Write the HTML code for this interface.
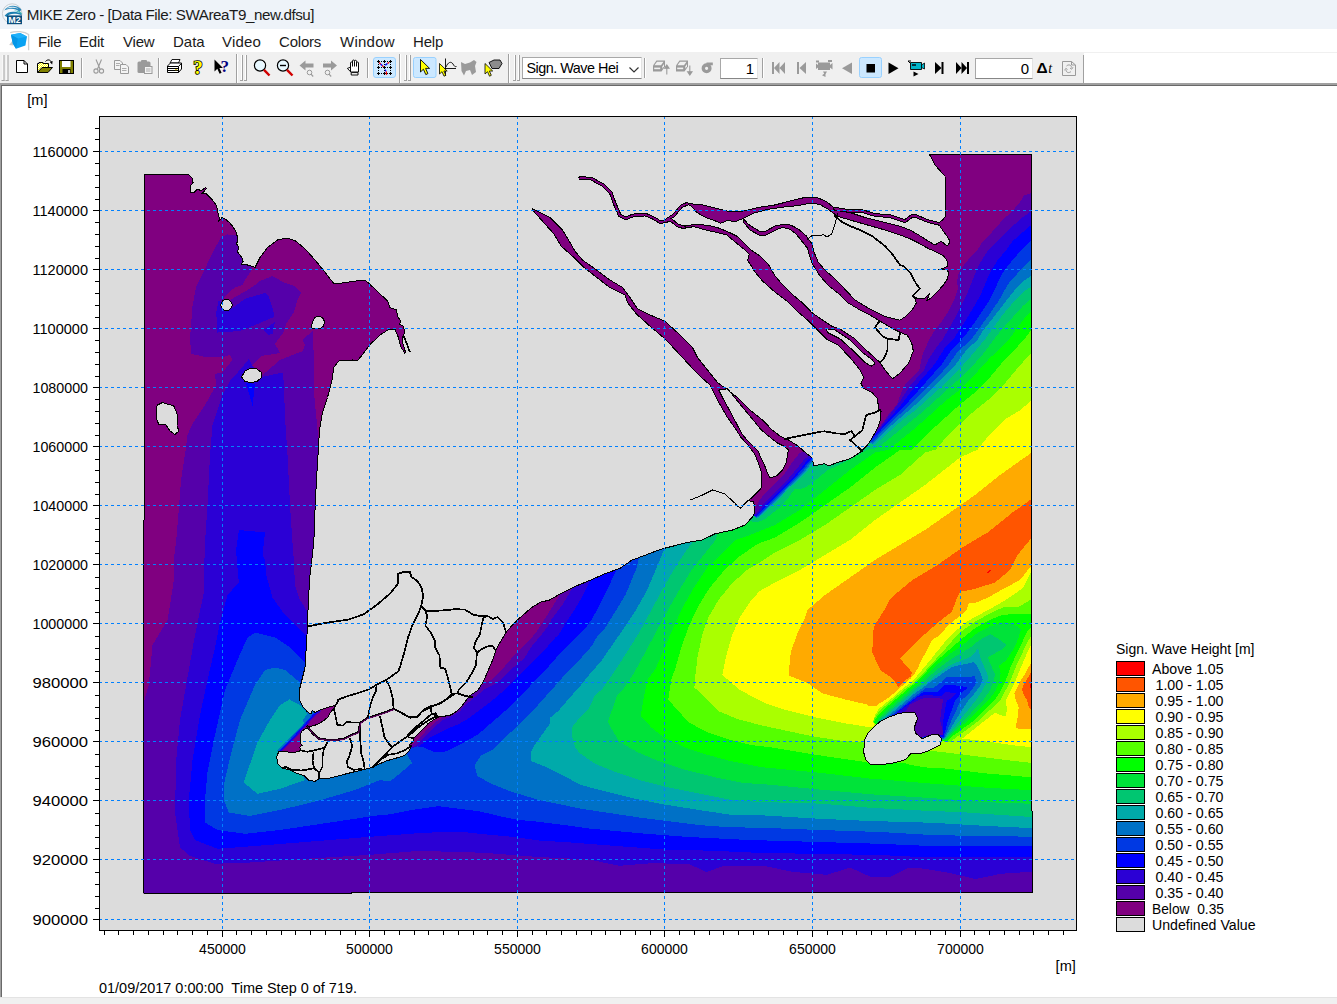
<!DOCTYPE html>
<html><head><meta charset="utf-8"><title>MIKE Zero - [Data File: SWAreaT9_new.dfsu]</title>
<style>
html,body{margin:0;padding:0;}
body{width:1337px;height:1004px;position:relative;overflow:hidden;background:#fff;
 font-family:"Liberation Sans",Arial,sans-serif;}
.abs{position:absolute;}
#title{left:0;top:0;width:1337px;height:29px;background:#EEF3F9;}
#title span{position:absolute;left:26.8px;top:5.5px;font-size:15.2px;color:#1b1b1b;white-space:nowrap;letter-spacing:-0.44px;}
#menu{left:0;top:29px;width:1337px;height:23px;background:#fff;}
#menu span{position:absolute;top:4px;font-size:15px;color:#1b1b1b;white-space:nowrap;letter-spacing:-0.2px;}
#tb{left:0;top:52px;width:1084px;height:31px;background:#F0F0F0;}
#tbline1{left:0;top:83px;width:1337px;height:2px;background:#A0A0A0;}
#tbline2{left:1px;top:85px;width:1336px;height:1px;background:#696969;}
#leftb1{left:0;top:85px;width:1px;height:912px;background:#A0A0A0;}
#leftb2{left:1px;top:85px;width:1px;height:912px;background:#696969;}
#status{left:0;top:997px;width:1337px;height:7px;background:#F0F0F0;border-top:1px solid #E3E3E3;box-sizing:border-box;}
.tbx{position:absolute;background:#fff;border:1px solid;border-color:#A8A8A8 #E3E3E3 #868686 #A8A8A8;box-sizing:border-box;
 font-size:15px;color:#000;white-space:nowrap;}
.hl{position:absolute;background:#CCE8FF;border:1px solid #99D1FF;box-sizing:border-box;border-radius:2px;}
</style></head><body>
<svg width="1337" height="1004" viewBox="0 0 1337 1004" style="position:absolute;left:0;top:0">
<defs><clipPath id="w"><polygon points="144.5,174.5 188.8,174.5 192.5,178.8 193.1,182.5 190.6,185.6 190,193.1 195,191.9 196.9,189.4 199.4,190 201.9,190 205.6,187.5 206.2,188.8 201.9,193.8 205.6,193.1 208.8,196.2 212.5,200 215.6,204.4 217.5,208.8 218.1,213.8 219.4,218.8 218.5,221.9 221.9,217.8 225,218.8 229.4,222.5 233.1,226.9 235.6,231.2 236.9,235 238.1,241.2 236.2,243.1 238.8,247.5 237.5,251.9 240,255 242.5,258.8 243.1,261.2 241.5,264.4 245,264.4 250,265.6 255,267.5 260,257.5 267.5,247.5 277.5,240 286,238 295,240.5 305,248.8 315,260 324,271 334,283.8 342.5,283 357.5,280.8 366,280.8 376,290 387.5,301 390,307.5 396.5,310 397.5,315.9 400.7,321.5 399.6,324.3 402.8,325.7 404.5,330.5 403.8,336.1 402,337 403,343.8 405.5,352.1 404.8,353.2 400.7,346.6 397.9,336.1 395.1,329.5 388.1,329.8 380.5,334.7 370,344.5 357.5,361 352.5,360 338.8,361 333.8,367.5 332,380 327.5,397.5 322.5,412.5 319.5,430 318,455 316.2,485 315,510 313.8,542.5 311.2,565 309.5,580 308,610 307,635 305,667.5 300,687.5 299.2,692 299.2,699.4 302.9,706.9 306.9,711.2 309.3,713.3 311.7,713 312,710.6 315.3,712.4 318.9,710.6 321.9,709.4 327.8,707.3 333.8,705.8 336.8,704 333.2,708.8 330.2,713 327.8,717.1 324.3,720.1 320.1,723.1 315.9,724.9 311.7,726.1 309.3,726.7 308.7,728.5 305.1,728.8 301.5,731.5 300.3,735.7 300.3,742.9 302.1,745.3 299.7,747.1 300.6,750.1 299.1,751.3 294.3,752.5 290.7,752.7 286,751.3 281.2,751 278.8,751.9 276.7,756.3 277.5,763.8 282.7,768.3 289.4,769.8 296.9,773.5 304.4,775.7 308.9,780.2 314.9,781.4 319.4,778.7 329.8,778 344.8,774.2 356.8,771.2 369.5,768.3 374.7,766 386.7,760.8 397.2,757.8 404.6,755.5 409.9,750.3 410.2,747.5 409.6,744.5 413.8,740.9 413.2,738.5 416.2,736.1 420.9,731.3 425.1,727.1 428.1,723.5 433.5,719.9 438.3,716.9 440.7,716 445.5,716 450.3,715.1 453.9,713.3 458.6,709.7 462.2,705.6 465.8,700.8 468.8,696.6 473,693.5 478,690.3 483.8,680.8 488.3,670.3 492.7,659.8 495.7,650.9 499.5,643.4 506.2,632.2 510.7,626.9 519.7,618 531.6,607.5 540.6,602.2 549.6,600 560,593.9 575,586.4 589.9,580.4 604.9,573.7 619.8,568.4 631.8,560.2 643.8,555.7 655.7,551.2 664.7,548.2 676.7,545.2 688.6,542.2 702.1,540 715,533.8 732.5,530 745,525 752.4,517.1 754.7,512.6 754.7,506.3 753.3,501.8 748,500.5 751.5,498.2 756,493.7 761,488.3 761.9,480.3 798.2,446.2 806.3,453.3 812.6,458.3 813.5,465.9 824.3,463.7 828.7,465.9 837.5,462.5 850,458.8 860,452.5 867.5,445 871.4,439.1 877.4,428.6 880.4,419.7 881.1,411.4 878.9,410.7 877.4,398.7 872.2,392.7 863.9,388.3 860.9,383.8 863.8,377.5 885,370 892.5,378.8 899.8,373.3 908.8,362.8 913.3,350.9 911.8,343.4 907.3,335.2 899.8,332.2 890.9,327.7 899.8,320.2 905.8,316.5 911.8,310.5 916.3,303 915.5,300 913.8,296.2 916.2,298 925,298 929.4,293.8 926.9,300.6 930,298.8 935,293.8 942.5,286.2 947.5,278.8 948.8,272.5 946.2,269 938.8,269.4 942.5,268.8 947.5,266.2 946.9,260 943.8,256.2 946.9,246.2 950,242.5 949.4,240 946.2,235 942.5,230 938.8,224.4 938.8,223 942.5,220 945.6,216.2 945.5,200 945,176.2 935,165 929.5,154.5 1031.5,154.5 1032,811 1033,811 1033,893 351.5,893 351.5,894 143.5,893.5"/>
</clipPath></defs>
<rect x="99" y="116" width="978" height="815" fill="#DCDCDC"/>
<g fill="#800080" stroke="#000" stroke-width="1" stroke-linejoin="round" shape-rendering="crispEdges">
<polygon points="532.5,208.8 550,217.5 562.5,230 570,242.5 575,251.2 582.5,260 595,268.8 610,280 622.5,287.5 630,297.5 637.5,308.8 650,315 665,321.2 680,335 692.5,347.5 697.5,357.5 707.5,370 717.5,382.5 725,388 737.5,397.5 750,410 762.5,420 772.2,430 780.3,436.3 789.2,440.3 798.2,446.2 806.3,453.3 800,470 775,492 761,488.3 761.9,480.3 761,470.4 757.8,461.4 754.2,453.3 748,445.3 740.8,437.2 736.3,430 727.5,417.5 717.5,400 710,385 697.5,373.8 682.5,357.5 665,338.8 650,326.2 636.2,313.8 627.5,302.5 625,295 610,287.5 600,280 582.5,266.2 572.5,256.2 561.2,246.2 553.8,233.8 542.5,221.2 532.5,210"/>
<polygon points="684.9,203.5 690.9,203.8 702.8,205 714.8,208 729.8,211.7 744.7,210.9 759.7,207.2 774.6,205 789.6,201.2 804.5,197.5 816.5,197.2 827,202 835,208.8 850,212.5 865,217.5 885,222.5 900,226.2 910,230 918.8,235 927.5,240.6 935,245 941.2,241.2 952,250 943.8,256.2 937.5,252.5 928.8,248.8 920,243.8 910,238.8 900,235 885,230 867.5,225 850,220 837.5,216.2 828.5,209.4 819.5,204.2 809,203.5 797.1,205.7 782.1,207.2 767.2,209.4 753.7,213.2 743.2,218.4 735.7,221.4 726.8,220.7 720.8,223.2 714.8,220.7 704.3,216.9 696.8,212.4 690.9,205.7"/>
<polygon points="683.4,226.4 693.9,224.4 707.3,225.2 717.8,227.7 729.8,232.6 737.2,236.4 744.7,243.9 750.7,249.8 759.7,255.8 768.6,264.8 774.6,275.3 782.1,284.2 792.6,294.7 801.6,302.2 812,312.7 822.5,320.1 831.5,326.1 840,329.1 855,338.8 867.5,351.2 880,362.5 885,370 889,377 875,386 863.8,377.5 860,370 850,357.5 838,345 827,339.6 816.5,329.1 807.5,320.1 797.1,311.2 786.6,300.7 774.6,291.7 762.7,281.2 755.2,272.3 747.7,260.3 749.2,254.3 744.7,249.8 735.7,242.4 726.8,234.9 717.8,232.6 707.3,230.4 693.9,226.6 683.4,228.4"/>
<polygon points="743.2,218.4 748.2,224.2 754,227.9 759.7,231.2 765.7,231.2 774.6,226.2 783.6,224.1 791.1,225.2 798.6,229.2 806,235.6 812,243.9 814.3,252.8 818,261.8 825.5,270.8 834.5,278.3 840,284 855,300 869.9,309 884.9,316.5 899.8,320.2 904,326 890.9,327.7 879.6,320.9 870,315 860,310 847.5,302.5 840,294.7 828.5,285.7 819.5,275.3 812,263.3 809,254.3 807.5,248.3 801.6,240.9 795.6,233.4 789.6,229.2 782.1,227.4 774.6,230.5 765.7,235.2 759.5,235.2 750.2,230.2 743.7,222.6"/>
</g>
<g fill="none" stroke-linejoin="round" stroke-linecap="round">
<polyline points="580.2,178 591.4,178.7 603.4,185.4 610.9,192.9 614.6,203.4 619.8,215.4 625.8,218.3 633.3,215.4 645.3,214.6 652.7,217.6 660.2,222.1 664.7,221.3" stroke="#000" stroke-width="3.7" shape-rendering="crispEdges"/>
<polyline points="664.7,221.3 673.7,215.4 681.2,206.4 687.1,203.8" stroke="#000" stroke-width="3.7" shape-rendering="crispEdges"/>
<polyline points="664.7,221.3 670.7,219.8 678.2,225.8 684.2,227.3" stroke="#000" stroke-width="3.7" shape-rendering="crispEdges"/>
<polyline points="835,208.8 850,211.2 862.5,211.2 875,215 890,216.2 905,221.2 912.5,215.5 916.2,216.2 925,220 931.2,222 938.8,223.7" stroke="#000" stroke-width="3.7" shape-rendering="crispEdges"/>
<polyline points="580.2,178 591.4,178.7 603.4,185.4 610.9,192.9 614.6,203.4 619.8,215.4 625.8,218.3 633.3,215.4 645.3,214.6 652.7,217.6 660.2,222.1 664.7,221.3" stroke="#800080" stroke-width="1.7" shape-rendering="crispEdges"/>
<polyline points="664.7,221.3 673.7,215.4 681.2,206.4 687.1,203.8" stroke="#800080" stroke-width="1.7" shape-rendering="crispEdges"/>
<polyline points="664.7,221.3 670.7,219.8 678.2,225.8 684.2,227.3" stroke="#800080" stroke-width="1.7" shape-rendering="crispEdges"/>
<polyline points="835,208.8 850,211.2 862.5,211.2 875,215 890,216.2 905,221.2 912.5,215.5 916.2,216.2 925,220 931.2,222 938.8,223.7" stroke="#800080" stroke-width="1.7" shape-rendering="crispEdges"/>
</g>
<g clip-path="url(#w)" shape-rendering="crispEdges">
<rect x="140" y="150" width="900" height="750" fill="#800080"/>
<polygon points="236.2,235.6 227.5,234.4 221,237.5 213.8,250 205,268.8 196,287.5 192.5,306 191,325 190,340 191,350 191.2,353.8 205,357 221,357.5 230,355 232.5,360 222.5,372.5 215,373.8 216.2,385 205,405 192.5,423.8 187.5,435 186,447.5 181,480 178.8,510 176,542.5 173.8,560 173.8,580 171.2,597.5 167.5,620 152.5,645 148.8,685 144.5,700 138,700 138,900 1040,900 1040,193 1031.8,193 1023.8,195.6 1020.6,201.2 1012.5,211.2 1003.8,218.8 993.8,230 981.2,243.8 977.5,250 970.3,257.2 963.1,266.2 958.6,273.3 957.3,279.6 957.7,289.5 954.1,300.3 948.7,311 941.5,321.8 934.4,330.8 929,339.8 922.3,355.3 919.3,370.3 905.8,383.8 901.3,392.7 896.8,404.7 887.9,415.2 879.6,427.2 869.2,438.4 862,441 848,449 830,455 817,455.5 805,450.5 799.5,453.1 795.6,457.9 791.9,462.8 788.5,468 785.1,473.1 781,477.8 776.6,482.2 772.3,486.5 767.9,490.9 763.5,495.2 759.6,500 756.8,505.5 754,511 751,513 743,519 731,524 714,528 700,534 687,536.5 675,539.5 663,542.5 654,545.5 642,550 630,554.5 618,562.5 603,568 588,574.5 573,580.5 560.2,594.4 551.2,608.6 543.6,620.9 534.6,634.4 525.7,643.4 516.7,652.4 507.7,662.8 498.7,673.3 492.7,679.3 483.8,683.8 481.5,685.3 476,688 469,695 462,702 455,708 447,711 438,710 441.9,718.2 434.4,722.7 426.9,730.1 418,739.1 410.5,746.5 405,748 395,750 380,754 365,760 345,765 325,770 310,772 300,768 290,763 283,758 280.4,753.3 288.8,744.9 295.3,738.3 301.9,731.1 307.9,724.5 315.1,716.1 320.5,712 322,706 312,702 305,690 308,675 311,650 312,620 314,590 316,560 319,520 321,480 323,455 318,447 317.5,430 314,392.5 313.8,355 312.5,331 302.5,340 305,345 303,351 290,356 280,360 262.5,375 257,369 250,368 252.5,365 261,356 267.5,355 280,353 275,343.8 283.8,332 286,323.8 293.8,312.5 297.5,300 301,292.5 295,286 283.8,282.5 272.5,276 260,281 255,285 247.5,290 238.8,295 230,300 226,303 224,297 230,291 235,287.5 242.5,285 245,280 250,272.5 252,268.8 250,262 244,258 240,240" fill="#5500AA"/>
<polygon points="248.8,358.8 246.2,362.5 238,372 230,381 222.5,395 212.5,425 210,455 207.5,505 205,542.5 203.8,580 203.8,592.5 195,635 187.5,677.5 180,720 176.2,760 175,812.5 180,847.5 190,856 215,863.8 250,862.5 305,858.8 367.5,855 417.5,851 464,852 489,853.2 539,857 589,859.5 619,865.8 651.5,863.2 689,864 706.5,872 724,865.8 764,865.8 791.4,871.7 827,874.9 850,867.5 871,877 889.8,877 908.7,867.5 923.4,868.6 948.5,872.8 975.7,879 1000.8,873.8 1031.8,871.7 1040,871.7 1040,210.6 1031.8,210.6 1022.5,217.5 1012.5,226.2 1000,238.8 990,248.8 988.2,250 982.8,258.1 977.5,268 973.9,276.9 970.3,285.9 966.7,294.9 961.3,305.7 955.9,316.4 949.6,327.2 942.4,339.8 937.2,346.4 928.3,359.8 923.8,370.3 910.3,385.3 899.8,401.7 889.4,415.2 880.4,427.2 869.9,439.1 862,441 848,449 830,455 817,455.5 808.8,455.8 804.2,459.5 800.4,464.4 796.4,469 792.5,473.8 788.6,478.5 784.3,482.9 780,487.4 775.7,491.9 771.3,496.2 766.8,500.4 762.7,505 759.1,509.9 755.3,514.6 751,513 743,519 731,524 714,528 700,534 687,536.5 675,539.5 663,542.5 654,545.5 642,550 630,554.5 618,562.5 603,568 588,574.5 572.2,588.5 562.4,604.9 551.2,619.8 549.6,623.9 540.6,635.9 531.6,646.4 524.2,658.3 513.7,667.3 504.7,676.3 495.7,683.8 483.8,689.8 474.8,697.2 465.8,704.7 459.8,711.4 450.9,716.7 443.4,719.7 435.9,725.7 428.4,733.1 419.4,742.1 413.5,747.3 405,748 395,750 380,754 365,760 345,765 325,770 310,772 300,768 290,763 283,758 279.8,752.8 288.2,744.4 294.7,737.8 301.3,730.6 307.3,724 314.5,715.6 319.9,711.5 322,706 312,702 305,690 308,675 311,650 312,620 308,612.5 300,600 295,585 293.8,560 292.5,542.5 290,505 287.5,455 285,417.5 283.8,382.5 282.5,372.5 262,377 255,370" fill="#2B00D5"/>
<polygon points="232.5,308 245,298.8 265,293 269,297 273.8,312.5 273.8,317 255,325 240,331 217.5,332.5 216.2,312.5 218.8,300 222,303" fill="#2B00D5"/>
<polygon points="263.8,330 275,322 272.5,333.8 268.8,335" fill="#2B00D5"/>
<polygon points="239,530 236,550 238.8,582.5 227.5,595 220,622.5 215,647.5 207.5,680 200,715 192.5,760 188.8,800 190,830 195,840 217.5,848.8 255,846 330,840 380,836 419.9,833.1 449.8,831.6 464,832 479.8,833.9 514,837 539.6,840.6 564,842 614,845.8 664,849.5 714,850.8 760,852.9 880,855 930,857.5 1031.8,857.1 1040,857.1 1040,224.4 1031.8,224.4 1022.5,232.5 1012.5,241.2 1006.2,250 997.2,260.8 990,272.4 985.5,283.2 981,294 975.7,303.9 970.3,312.8 963.1,324.5 955.9,335.3 953.2,339.8 944.7,347.9 935.7,362.8 926.8,373.3 914.8,386.8 901.3,404.7 890.9,416.7 881.9,427.2 870.7,439.9 862,441 848,449 830,455 817,455.5 810.3,457.8 805.9,461.9 802.2,466.8 798.1,471.4 794.1,476.1 789.9,480.6 785.5,484.9 781.3,489.4 777.1,493.9 772.6,498.2 768.1,502.4 763.9,506.9 759.9,511.5 755.8,515.9 751,513 743,519 731,524 714,528 700,534 687,536.5 675,539.5 663,542.5 654,545.5 642,550 630,554.5 618,562.5 603,568 590.1,581 581.9,597.4 572.9,612.4 565.4,623.6 558.7,634.8 555.6,637.4 545.1,649.4 534.6,659.8 524.2,670.3 513.7,680.8 503.2,691.2 492.7,700.2 480.8,709.2 468.8,718.2 458.3,724.2 447.9,728.6 438.9,733.1 429.9,737.6 422.4,743.6 416.5,748.1 405,748 395,750 380,754 365,760 345,765 325,770 310,772 300,768 290,763 283,758 279.2,752.2 287.6,743.8 294.1,737.2 300.7,730 306.7,723.4 313.9,715 319.3,710.9 322,706 312,702 305,690 308,675 311,650 307,636 300,630 285,615 272.5,597.5 266.2,575 265,560 262.5,555 265,532.5" fill="#0000FF"/>
<polygon points="246,383 255,383.8 252.5,406" fill="#0000FF"/>
<polygon points="255,632.5 247.5,637.5 237.5,660 225,690 215,735 207.5,772.5 205,800 205,822.5 217.5,830 245,833.8 280,830 330,822.5 380,815 390,814.4 412.4,809.9 437.9,806.2 457.3,808.5 479.8,811.4 502.2,816.7 517.2,819.7 539.6,821.9 569.5,825.7 590,828.6 639,833.2 689,837 739,839.5 760,840.3 880,843.8 930,846 1031.8,846.2 1040,846.2 1040,240 1031.8,240 1021.4,250 1013.4,259 1006.2,268 1000.8,276 997.2,284.1 993.6,292.2 988.2,302.1 981,312.8 973.9,323.6 966.7,333.5 961.3,339.8 950.7,350.9 941.7,364.3 929.8,377.8 917.8,391.2 904.3,406.2 893.9,416.7 884.9,425.7 871.4,440.6 862,441 848,449 830,455 817,455.5 811.1,459 807,463.3 803.2,468.3 799.1,472.8 795,477.4 790.7,481.8 786.2,486 782,490.6 777.8,495.1 773.3,499.4 768.8,503.5 764.6,508 760.4,512.5 756.1,516.7 751,513 743,519 731,524 714,528 700,534 687,536.5 675,539.5 663,542.5 654,545.5 642,550 630,554.5 616.2,570 607.3,589.9 599.8,604.9 592.4,618.3 584.9,628.8 579.5,634 569,644.9 557.1,656.8 546.6,668.8 534.6,680.8 524.2,692.7 512.2,704.7 500.2,715.2 489.8,724.2 477.8,734.6 464.8,741.9 452.8,747.9 445.3,751.6 433.4,751.6 422.9,747.1 416.9,746.4 412.4,747.9 405,748 395,750 380,754 365,760 345,765 325,770 310,772 300,768 290,763 283,758 278.6,751.7 287,743.3 293.5,736.7 300.1,729.5 306.1,722.9 313.3,714.5 318.7,710.4 322,706 312,702 305,690 308,675 305,662.5 290,647.5 275,637.5" fill="#0039E3"/>
<polygon points="275,667.5 265,670 255,685 240,720 230,757.5 223.8,785 223.8,800 228.8,812.5 250,816 280,810 317.5,801 355,790 380,780 390,781.5 402,771.8 412.4,762.8 408.7,757.6 405,748 395,750 380,754 365,760 345,765 325,770 310,772 300,768 290,763 283,758 278,751.1 286.4,742.7 292.9,736.1 299.5,728.9 305.5,722.3 312.7,713.9 318.1,709.8 322,706 312,702 305,690 301,684 300,682.5 285,670" fill="#0071C6"/>
<polygon points="1040,258.8 1031.8,259 1023.2,267.1 1015.2,276 1008,284.1 1003.5,292.2 999,300.3 991.8,311 984.6,320.9 977.5,330.8 971.2,339.8 958.2,350.9 947.7,365.8 934.2,380.8 920.8,394.2 907.3,407.7 896.8,416.7 886.4,427.2 872.2,442.1 862,441 848,449 830,455 817,455.5 812,460.2 808,464.7 804.3,469.7 800.1,474.2 795.9,478.7 791.5,483 787,487.2 782.8,491.7 778.6,496.3 774.1,500.5 769.5,504.7 765.2,509.1 760.9,513.4 756.4,517.5 751,513 743,519 731,524 714,528 700,534 687,536.5 675,539.5 663,542.5 654,545.5 639.3,557.2 636,570 633.3,575.9 626,593.7 618.5,606.4 611.1,618.3 603.6,630.3 597.4,636 591.5,646.4 579.5,659.8 567.5,671.8 555.6,685.3 543.6,698.7 531.6,712.2 518.2,725.7 504.7,737.6 492.7,749.6 481.2,755.3 474.5,765.1 477.5,776.3 491.7,783.8 509.7,791.2 524.6,795.7 539.6,800.2 562,804.7 580,808.6 609.9,813.1 639.8,817.6 669.8,821.4 699.7,825.1 729.6,827.3 760,827.7 820,830 880,832 930,834.9 962.9,835.7 1031.8,836.7 1040,836.7" fill="#0071C6"/>
<polygon points="289.4,699.4 280,705 270,720 257.5,742.5 248.8,767.5 243.8,782.5 257.5,793.8 280,788.8 305,780 300,770 290,763 283,758 277.4,750.6 285.8,742.2 292.3,735.6 298.9,728.4 303.9,723.1 302.7,720.1 306.9,714.7 306.3,712.4 301.5,706.4 297.9,704" fill="#00AAAA"/>
<polygon points="1040,275 1031.8,275.6 1023.2,281.4 1015.2,289.5 1008,298.5 1002.6,305.7 996.3,313.7 990,321.8 982.8,330.8 977.5,339.8 965.7,350.9 953.7,367.3 938.7,382.3 923.8,397.2 910.3,409.2 899.8,418.2 887.9,428.6 872.9,443.6 862,441 848,449 830,455 817,455.5 812.7,461.2 808.9,466 805.3,471 800.9,475.4 796.7,479.8 792.2,484.1 787.6,488.2 783.4,492.8 779.3,497.4 774.8,501.6 770.2,505.7 765.9,510.1 761.4,514.3 756.6,518.2 751,513 743,519 731,524 714,528 700,534 687,536.5 675,539.5 664.7,548.2 655.7,569.9 646.8,590.9 634.8,611.8 622.8,629.8 609.4,649.2 600,662.8 591.5,671.8 579.5,686.8 567.5,700.2 558.6,710.7 549.6,718.2 549.6,724.2 542.1,734.6 534.6,745.1 531.4,750.9 531.4,761.3 547.1,767.3 562,774.8 580,784.7 602.4,790.7 632.4,798.2 662.3,804.2 699.7,810.1 729.6,814.6 760,815.2 820,818.8 870,821 930,822.7 960.5,824.4 987.6,826 1031.8,828.1 1040,828.1" fill="#00AAAA"/>
<polygon points="1040,286.2 1031.8,285.9 1023.2,292.2 1015.2,300.3 1008,308.3 1000.8,317.3 994.5,326.3 989.1,333.5 984.6,339.8 971.6,355.3 959.7,368.8 944.7,383.8 929.8,397.2 914.8,410.7 902.8,419.7 889.4,431.6 874.4,445.1 862,441 848,449 830,455 817,455.5 813.5,462.3 809.9,467.3 806.2,472.3 801.8,476.7 797.5,481 792.9,485.1 788.3,489.3 784.1,493.8 780,498.4 775.5,502.6 770.9,506.8 766.5,511.1 761.8,515.2 756.9,518.9 751,513 743,519 731,524 714,528 700,534 693.1,541.5 684.2,553.5 673.7,569.9 661.7,590.9 651.3,610.3 640.8,629.8 628.8,649.2 615.4,670.1 601.9,689.6 595,695 589,708.4 580,717.4 572,727.2 571.7,735.9 575.5,747.9 580,753.3 595,763.8 617.4,772.7 639.8,780.2 669.8,787.7 699.7,793.7 729.6,799.7 760,802 820,803.6 869.4,807.7 930,811 960.5,812 987.6,814.1 1031.8,817 1040,817" fill="#00C671"/>
<polygon points="1040,298.8 1031.8,298.5 1023.2,305.7 1015.2,314.6 1008,322.7 1000.8,330.8 993.6,339.8 982.1,355.3 967.2,371.8 952.2,385.3 937.2,398.7 922.3,412.2 907.3,424.2 892.4,436.1 877.4,448.1 868,449.5 862.5,452.5 850,459.6 837.7,465.9 828.7,469.5 819.8,476.7 810.8,483.9 803.6,488.3 794.6,489.2 787.5,499.1 780.3,507.2 772.2,513.5 764.1,519.8 756,522.5 750,521 735,526 718,531 715.6,540 703.6,555 691.6,569.9 679.7,589.4 667.7,610.3 657.2,629.8 645.3,652.2 634.8,671.6 622.8,689.6 617.4,695 607.7,721.9 618.9,741.3 636.8,751.8 657.8,760.8 684.7,769.8 714.6,777.2 744.5,783.2 760,783.8 820,789.6 869.4,794.2 930,798 960.5,800.1 987.6,802.2 1031.8,803.8 1040,803.8" fill="#00E339"/>
<polygon points="1040,304.5 1031.8,310.1 1023.2,320 1015.2,330.8 1008.9,339.8 989.6,358.3 974.6,374.8 959.7,389.8 944.7,401.7 929.8,415.2 914.8,428.6 899.8,440.6 889.4,449.6 875,452.5 850,470 825,490 800,510 775,525 750,535 735,540 721.6,553.5 706.6,568.4 694.6,586.4 682.7,607.3 673.7,626.8 664.7,647.7 655.7,668.6 647.3,680 644.3,695 640.6,715.9 651.8,727.9 665.3,738.3 684.7,747.3 707.2,754.8 729.6,760.8 752,765.3 760,767 820,772.8 869.4,778.5 930,783.5 960.5,785.7 987.6,787.8 1031.8,790.2 1040,790.2" fill="#00FF00"/>
<polygon points="1040,329.9 1031.8,329 1024.1,339.8 1004.5,359.8 989.6,377.8 974.6,392.7 959.7,404.7 944.7,418.2 929.8,431.6 911.8,449.6 900,450 875,467.5 850,487.5 825,505 800,522.5 775,537.5 760,543 754.5,546 739.5,556.5 724.5,569.9 709.6,587.9 697.6,607.3 688.6,626.8 681.2,647.7 675.2,668.6 671.2,680 668.3,699.4 677.2,709.9 689.2,722.6 707.2,732.4 729.6,739.8 752,745.1 769.8,747.2 814.6,754.6 844.5,759.1 864.7,761.8 875,765 902.3,762.5 910.5,764.9 922.9,767 930,767.8 946.5,768.6 962.9,770.7 987.6,773.6 1012.3,775.6 1031.8,777.5 1040,777.5" fill="#55FF00"/>
<polygon points="1040,352.4 1031.8,352.4 1019.5,365.8 1004.5,383.8 989.6,398.7 974.6,410.7 959.7,424.2 944.7,439.1 935.7,449.6 925,452.5 900,475 875,490 850,507.5 825,525 800,540 775,552.5 760,562.4 747,569.9 732,583.4 718.6,599.8 708.1,617.8 702.1,635.7 697.6,656.7 695.4,674.6 694.4,687.5 707.2,699.4 719.1,711.4 737.1,718.9 759.5,724.9 780,729.4 814.6,736.7 844.5,741.2 865.5,742.7 900,748 929,750.5 946.5,752.6 960.5,754.2 979.4,756.7 995.8,758.7 1012.3,760.8 1031.8,762.9 1040,762.9" fill="#AAFF00"/>
<polygon points="1040,400.2 1031.8,400.2 1019.5,410.7 1004.5,419.7 989.6,434.6 977.6,449.6 960,457.5 925,485 900,502.5 875,520 850,540 825,555 800,570 775,582.5 760,590.9 751.5,599.8 739.5,617.8 732,635.7 726,656.7 722.3,674.6 728.1,680 738.6,689 752,696.5 767,703.9 784.7,709.8 814.6,717.2 844.5,723.2 873,727.7 900,735 940,742 962.1,738.6 979.4,740.6 995.8,742.7 1012.3,745.2 1031.8,747.2 1040,747.2" fill="#FFFF00"/>
<polygon points="1040,452.5 1031.8,452.5 1000,475 975,495 950,512.5 925,530 900,545 875,560 850,577.5 825,595 807.5,610 804.2,620 796.7,635 790.7,652.9 788.5,675.3 807.2,682.8 822.1,693.3 844.5,699.3 867,704.5 868,705.7 876.4,705.7 878.5,704.1 883.7,700.9 888.9,697.3 894.2,693.1 899.4,688.4 904.6,683.7 908.8,680 910.5,678.7 914.7,673.5 917.8,668.3 920.9,660.9 925.1,653.6 928.3,647.3 931.9,640 940,635 947,626.6 960.4,615.3 966,611.1 968.8,603.4 975.2,603 989.2,597 1001.2,590 1020,580 1031.8,565 1040,565" fill="#FFAA00"/>
<polygon points="1040,498.8 1031.8,498.8 1012.5,512.5 987.5,532.5 962.5,547.5 937.5,565 912.5,580 897.5,592.5 889.4,600 884.9,609 873.7,626.9 872.2,652.4 880.4,670.3 892.6,678.6 898.4,686.8 905.7,680 910.5,676.6 912.3,672.7 900,658.6 918.1,640 940,620.9 952,611.8 956.2,599.8 960.4,591.4 970.2,590 975,588.8 995,582.5 1010,570 1017.5,555 1031.8,537.5 1040,537.5" fill="#FF5500"/>
<polygon points="987,572.5 988.5,570.5 991,569.5 990,571.5 988,573" fill="#FF0000"/>
<polygon points="871.1,729.2 873.8,725.5 873.2,720.8 874.8,715.6 878.5,709.3 883.7,704.6 888.9,700.4 894.2,696.2 899.4,691.5 904.6,686.8 910.5,682.9 915.7,677.7 920.9,671.4 926.2,665.1 931.4,658.8 936.6,652 941.9,645.8 947,639.2 954.1,632.2 968.1,620.9 982.2,613.2 996.3,605.5 1010.3,597 1020.2,590 1024,586 1031.8,570 1040,570 1040,644 1031.8,644 1028.4,650 1021.6,665.7 1015.3,681.4 1010.1,691.9 1005.9,700 1007,710.5 1005.4,716.8 1001.8,715.4 995,712.8 992.4,714.7 984.5,720.9 971.4,731.4 962,738.7 950,744 942,744.5 905,738" fill="#AAFF00"/>
<polygon points="873.2,721.9 874.8,717.7 878.5,712.5 883.7,707.2 894.2,698.3 904.6,689.4 910.5,685.5 915.7,680.8 920.9,675.6 926.2,669.8 931.4,664.1 936.6,658.3 941.9,652.6 947.1,646.8 952.9,640 961.1,631.5 975.2,621.6 989.2,613.9 1003.3,607.2 1018.8,606.9 1031.8,599.1 1040,599.1 1040,634 1031.8,634 1023.7,650 1016.4,665.7 1010.1,681.4 1004.8,691.9 1000.4,700 978.7,720.9 957.3,736.6 950,742 905,738" fill="#55FF00"/>
<polygon points="873.8,722.9 875.9,718.2 881.1,712.5 888.9,705.1 899.4,696.2 909.9,687.3 915.7,682.9 920.9,677.7 926.2,671.9 931.4,666.2 936.6,660.9 941.9,656.2 947.1,651.5 952.4,647.3 960.2,640 975.2,628 989.2,620.2 1001.2,615.3 1010.3,614.3 1031.8,613.9 1040,613.9 1040,626 1031.8,626 1027,632 1018.5,650 1011.1,665.7 1005.4,681.4 1000.1,691.9 994.6,700 973.5,720.9 952,736.6 947,741 905,738" fill="#00FF00"/>
<polygon points="875.9,721.9 878.5,718.2 882.7,714 888.9,707.7 899.4,698.8 909.9,689.9 915.7,685.5 920.9,680.3 926.2,675.1 931.4,669.8 936.6,665.1 941.9,660.4 947.1,656.2 952.4,652 960.2,646.8 967.5,641 975.2,634.3 989.2,626.6 1003.3,622.3 1010.3,623 1016,625.2 1020.9,629.4 1018.1,639.2 1013,650 1005.9,660.5 999.1,665.7 1000.6,673 999.6,681.4 994.9,691.9 988.9,700 967.7,720.9 949.5,736.6 945.5,740.5 905,738" fill="#00E339"/>
<polygon points="878,721.4 881.1,717.7 886.3,713 894.2,706.2 904.6,697.3 915.1,687.9 920.9,684.5 926.2,679.3 931.4,674.6 936.6,669.8 941.9,665.7 947.1,662 952.4,658.3 957.6,655.2 962.8,652 970,647.9 975.2,643.4 982.2,638.5 990.6,634 999.8,639.9 1006.8,644.9 1001,650 987.8,657.3 991.2,665.7 994.9,674.1 993.8,681.4 989.1,691.9 983.2,700 963.6,720.9 948,736.6 944.5,740 905,738" fill="#00C671"/>
<polygon points="879.5,721.4 883.7,717.2 888.9,713 899.4,704.1 909.9,695.2 920.4,685.8 926.2,683.5 931.4,678.7 936.6,674.6 941.9,670.9 947.1,667.2 952.4,664.1 957.6,662 962.8,659.9 970,657.3 975,652.5 977.5,649 978.6,650.5 981.3,660.5 986,670.9 988.6,677.2 986,684 981.3,691.9 976,700 959.4,720.9 946.8,736.6 944,739.5 905,738" fill="#00AAAA"/>
<polygon points="881.1,721.4 886.3,717.2 894.2,710.9 904.6,702 915.1,693.1 923,687.5 931.4,681 936.6,677.7 940.8,674.6 946.1,670.9 950.8,667.7 955,666.2 962.8,664.6 970,663 973.4,662 977.1,665.7 981.3,675.1 982.8,679.8 979.7,686.6 974.5,693.5 968.5,700 955.2,720.9 945.6,736.6 943.5,739 905,738" fill="#0071C6"/>
<polygon points="883.7,720.8 888.9,717.2 894.2,713 904.6,704.6 915.1,696.2 925.6,688.4 933.5,688.2 936.6,685.5 941.9,681.4 946.1,677.2 954.5,677.2 967.1,677.2 974.5,676.2 976.6,682.5 971.9,689.8 965.6,697.1 960.9,700 951.3,720.9 944.6,736.6 943,738.5 905,738" fill="#0039E3"/>
<polygon points="888.9,718.2 894.2,714.6 904.6,706.2 915.1,698.3 923.5,692 938,691.5 939.8,690 945,685 955.5,685.5 964,686.6 967.7,687.7 964,690.8 955.2,700 947.9,720.9 943.6,736.6 905,738" fill="#0000FF"/>
<polygon points="897.3,712.5 902,709.3 909.9,703.6 917.7,697.3 923.5,695.2 938,695.7 941.9,696.1 945.5,692.1 956.3,693 950,699.2 946.8,700 943.1,720.9 942.8,735 905,738" fill="#2B00D5"/>
<polygon points="904.6,711.9 906.7,709.3 909.9,704.6 915.1,702 923,698.3 938,698.1 942.8,699.2 943.1,700 941,711.8 940.1,720.8 942.5,730 942.5,735 905,738" fill="#5500AA"/>
<polygon points="1040,661 1031.8,661 1026.8,670.9 1021.6,679.3 1016.9,687.7 1014.3,693.5 1015.8,700 1018.7,707.5 1017.5,718 1015.6,727.5 1018.9,729.1 1031.8,729.5 1040,729.5" fill="#FFAA00"/>
<polygon points="1040,671.5 1031.8,671.5 1026.8,679.3 1023.2,685.6 1021.9,689.8 1024.2,695.5 1026.8,700 1028.5,706 1031.8,711.5 1040,711.5" fill="#FF5500"/>
<polygon points="1030.3,683.5 1040,683.5 1040,688 1030.3,688" fill="#FF0000"/>
</g>
<g fill="none" stroke="#000" stroke-width="1" stroke-linejoin="round" shape-rendering="crispEdges">
<polyline points="143.5,893.5 144.5,174.5 188.8,174.5 192.5,178.8 193.1,182.5 190.6,185.6 190,193.1 195,191.9 196.9,189.4 199.4,190 201.9,190 205.6,187.5 206.2,188.8 201.9,193.8 205.6,193.1 208.8,196.2 212.5,200 215.6,204.4 217.5,208.8 218.1,213.8 219.4,218.8 218.5,221.9 221.9,217.8 225,218.8 229.4,222.5 233.1,226.9 235.6,231.2 236.9,235 238.1,241.2 236.2,243.1 238.8,247.5 237.5,251.9 240,255 242.5,258.8 243.1,261.2 241.5,264.4 245,264.4 250,265.6 255,267.5 260,257.5 267.5,247.5 277.5,240 286,238 295,240.5 305,248.8 315,260 324,271 334,283.8 342.5,283 357.5,280.8 366,280.8 376,290 387.5,301 390,307.5 396.5,310 397.5,315.9 400.7,321.5 399.6,324.3 402.8,325.7 404.5,330.5 403.8,336.1 402,337 403,343.8 405.5,352.1 404.8,353.2 400.7,346.6 397.9,336.1 395.1,329.5 388.1,329.8 380.5,334.7 370,344.5 357.5,361 352.5,360 338.8,361 333.8,367.5 332,380 327.5,397.5 322.5,412.5 319.5,430 318,455 316.2,485 315,510 313.8,542.5 311.2,565 309.5,580 308,610 307,635 305,667.5 300,687.5 299.2,692 299.2,699.4 302.9,706.9 306.9,711.2 309.3,713.3 311.7,713 312,710.6 315.3,712.4 318.9,710.6 321.9,709.4 327.8,707.3 333.8,705.8 336.8,704 333.2,708.8 330.2,713 327.8,717.1 324.3,720.1 320.1,723.1 315.9,724.9 311.7,726.1 309.3,726.7 308.7,728.5 305.1,728.8 301.5,731.5 300.3,735.7 300.3,742.9 302.1,745.3 299.7,747.1 300.6,750.1 299.1,751.3 294.3,752.5 290.7,752.7 286,751.3 281.2,751 278.8,751.9 276.7,756.3 277.5,763.8 282.7,768.3 289.4,769.8 296.9,773.5 304.4,775.7 308.9,780.2 314.9,781.4 319.4,778.7 329.8,778 344.8,774.2 356.8,771.2 369.5,768.3 374.7,766 386.7,760.8 397.2,757.8 404.6,755.5 409.9,750.3 410.2,747.5 409.6,744.5 413.8,740.9 413.2,738.5 416.2,736.1 420.9,731.3 425.1,727.1 428.1,723.5 433.5,719.9 438.3,716.9 440.7,716 445.5,716 450.3,715.1 453.9,713.3 458.6,709.7 462.2,705.6 465.8,700.8 468.8,696.6 473,693.5 478,690.3 483.8,680.8 488.3,670.3 492.7,659.8 495.7,650.9 499.5,643.4 506.2,632.2 510.7,626.9 519.7,618 531.6,607.5 540.6,602.2 549.6,600 560,593.9 575,586.4 589.9,580.4 604.9,573.7 619.8,568.4 631.8,560.2 643.8,555.7 655.7,551.2 664.7,548.2 676.7,545.2 688.6,542.2 702.1,540 715,533.8 732.5,530 745,525 752.4,517.1 754.7,512.6 754.7,506.3 753.3,501.8 748,500.5 751.5,498.2 756,493.7 761,488.3 761.9,480.3"/>
<polyline points="798.2,446.2 806.3,453.3 812.6,458.3 813.5,465.9 824.3,463.7 828.7,465.9 837.5,462.5 850,458.8 860,452.5 867.5,445 871.4,439.1 877.4,428.6 880.4,419.7 881.1,411.4 878.9,410.7 877.4,398.7 872.2,392.7 863.9,388.3 860.9,383.8 863.8,377.5"/>
<polyline points="885,370 892.5,378.8 899.8,373.3 908.8,362.8 913.3,350.9 911.8,343.4 907.3,335.2 899.8,332.2 890.9,327.7"/>
<polyline points="899.8,320.2 905.8,316.5 911.8,310.5 916.3,303 915.5,300 913.8,296.2 916.2,298 925,298 929.4,293.8 926.9,300.6 930,298.8 935,293.8 942.5,286.2 947.5,278.8 948.8,272.5 946.2,269 938.8,269.4 942.5,268.8 947.5,266.2 946.9,260 943.8,256.2"/>
<polyline points="946.9,246.2 950,242.5 949.4,240 946.2,235 942.5,230 938.8,224.4"/>
<polyline points="938.8,223 942.5,220 945.6,216.2 945.5,200 945,176.2 935,165 929.5,154.5 1031.5,154.5 1031.5,811 1032.5,811 1032.5,892.5 351.5,892.5 351.5,893.5 143.5,893.5"/>
</g>
<g fill="#DCDCDC" stroke="#000" stroke-width="1" stroke-linejoin="round" shape-rendering="crispEdges">
<polygon points="232.2,305 231.8,307.1 230.5,308.9 228.7,310.1 226.5,310.5 224.3,310.1 222.5,308.9 221.2,307.1 220.8,305 221.2,302.9 222.5,301.1 224.3,299.9 226.5,299.5 228.7,299.9 230.5,301.1 231.8,302.9"/>
<polygon points="313,321 315,317.5 318.5,316.2 322.5,317.5 324.5,321.5 323.5,326 320,328.5 315,328.8 311,328 311.5,325"/>
<polygon points="241.5,377 245,371 251,368.2 257,369 261.5,372.5 262,377 257,381.5 251,382.5 245,381.5"/>
<polygon points="157.5,405 162.5,402.5 173.8,406 177.5,415 177,426 179,431 175,434.5 170,431 166,425 158.8,424.5 156,417.5 156,407.5"/>
<polygon points="863.7,752.4 864.7,739.8 868,733 871.1,730 880,721.4 888.9,717.2 897.3,714 904.6,712.5 914.6,712.5 917.7,718.7 915.1,724.5 914.6,730 916,733.5 922.3,738.7 931.7,734.6 938,734.6 941.8,738.7 940.1,745 929.6,750.3 919.2,754 910.8,753.4 905.5,759.7 894,762.8 880.4,764.9 871,764.9 865.8,759.7"/>
<polygon points="718.8,390 727.5,388.8 744,409 761.4,430 767.7,435.4 776.7,442.6 783.9,446.2 788.3,449.7 787.5,456 786.1,463.2 782.1,470.4 776.7,475.8 770.4,478 768.6,475.8 764.1,464.1 759.6,455.1 758.7,451.5 752.4,445.3 746.2,439 741.7,433.6 739.9,430 731,413 723.8,400"/>
<polygon points="826.2,328.8 835,330 850,340 862.5,352.5 872.5,360 875,363.8 871.2,366.2 865,362.5 852.5,350 840,338.8 827.5,332.5"/>
</g>
<g fill="#DCDCDC" stroke="#000" stroke-width="1" stroke-linejoin="round">
</g>
<g fill="none" stroke="#000" stroke-width="1" stroke-linejoin="round" stroke-linecap="round" shape-rendering="crispEdges">
<polyline points="307.5,626.5 326.2,622.7 348.7,619.6 363.6,614.3 376.7,605 389.9,593.7 398.3,583.4 397.7,574 404.8,571.6 410,572.2 411.4,576.9 417.9,581.5 421.7,588.1 423.2,595.6 421.3,605.9" stroke-width="1.7"/>
<polyline points="421.3,605.9 417.9,614.3 412.3,625.5 407.6,638.7 403.9,653.6 400.1,666.7 398.3,671.4 391.7,676.1 386.1,679.9 376.7,684.5 369.3,689.2 358,693 348.7,695.8 338.4,699.5 336.8,704" stroke-width="1.7"/>
<polyline points="421.3,605.9 425.4,610.6 434.8,610.9 446,610.2 455.4,609.1 464.8,609.6 473.2,614.7 481.6,616.2 487.2,615.8 492.9,619 497.5,617.1 503.2,622.7 505,629.3 506.3,632.1" stroke-width="1.7"/>
<polyline points="425.4,610.6 427.3,616.2 425.4,625.5 431,633 434.8,640.5 434.8,647.1 439.5,655.5 440.4,667.7 445.1,668.6 447.9,678 450.7,689.2 451.6,693.9 446,699.5 438.5,704.2 431,706.1 423.6,709.8 417,717.3 410.4,717.7 401.1,712.6 393.6,708.9" stroke-width="1.7"/>
<polyline points="487.2,615.8 483.5,618 481.6,625.5 479.7,634.9 475,642.4 474.1,648 476.9,652.7 476,664.9 471.3,674.2 466.6,681.7 459.1,689.2 457.3,693.3 451.6,693.9" stroke-width="1.7"/>
<polyline points="476.9,652.7 483.5,648 489.1,645.8 492.9,646.1 494.7,648.9 495.7,650.9" stroke-width="1.7"/>
<polyline points="457.3,693.3 464.8,695.8 469.4,696.7 472,697" stroke-width="1.7"/>
<polyline points="386.1,679.9 389.9,687.3 392.7,698.6 393.6,708.9" stroke-width="1.7"/>
<polyline points="393.6,708.9 386.1,711.7 376.7,715.4 369.3,717.3 360.5,722.6 353.8,722.6 346.3,721.9 343.3,725.6 337.3,724.9 335.8,717.4 334,709" stroke-width="1.7"/>
<polyline points="376.7,684.5 375.8,691.1 373.2,696.5 370.2,705.4 368,717.4" stroke-width="1.7"/>
<polyline points="393.6,708.9 400.1,712.2 409.1,717.4 418.1,716.6 421.1,712.2 430.8,706.9 442,702.4 449.5,697.2 455.5,693.5" stroke-width="1.7"/>
<polyline points="430.8,706.9 431.6,713.7 438.3,716.6" stroke-width="1.7"/>
<polyline points="380,716.6 382.2,726.4 384.4,736.8 388.2,742.8 391.9,747.3" stroke-width="1.7"/>
<polyline points="437.5,715.9 428.6,720.4 419.6,726.4 409.1,735.3 400.1,741.3 391.9,747.3 386.7,753.3 380.7,759.3 373.2,766.8" stroke-width="1.7"/>
<polyline points="411.4,745.8 404.6,750.3 397.2,753.3 388.2,754.8 383.7,757.8" stroke-width="1.7"/>
<polyline points="438.3,716.9 435.3,713.3 431.7,713.9 423.9,720.5 418,725.3 412,730.7 407.8,734.9 408.4,737.3 413.2,737.9" stroke-width="1.7"/>
<polyline points="360.5,722.6 359.8,732.4 360.5,742.8 361.2,753.3 363.5,760.8 364.5,768.3" stroke-width="1.7"/>
<polyline points="350,738.3 352.3,745.8 349.3,756.3 347,760.8 347.8,766.8 353.8,769.8 361.2,769" stroke-width="1.7"/>
<polyline points="327.6,742.1 323.9,748.8 322.4,757.8 322.4,766.8 319.4,772.7 318.6,778.7" stroke-width="1.7"/>
<polyline points="299.9,750.3 307.4,751.8 314.1,750.3 323.1,748.1" stroke-width="1.7"/>
<polyline points="313.4,753.3 312.6,760.8 314.1,768.3 319.4,772.7" stroke-width="1.7"/>
<polyline points="282.7,768.3 285,766.8 292.4,769.8 301.4,770.5 310.4,769 314.1,768.3" stroke-width="1.7"/>
<polyline points="403.8,336.1 409.7,351.4" stroke-width="1.7"/>
<polyline points="785,438.8 801.8,435.4 819.8,431.8 824.3,431.3 837.7,433.6 845,433.8 851.2,431.2 855,436.2 850,440 862.5,451.2" stroke-width="1.7"/>
<polyline points="855,436.2 862.5,430 866.2,415 875,412.5 880,410" stroke-width="1.7"/>
<polyline points="879.6,320.9 875,327.5 882.5,336.2 887.5,338.8 898.8,340 900,332.5" stroke-width="1.7"/>
<polyline points="887.5,338.8 887.5,350 883.8,358.8 880,362.5" stroke-width="1.7"/>
<polyline points="900,265 903.8,266.2 910,272.5 916.2,283.8 920,288.8 912.5,296.2 916.2,298" stroke-width="1.7"/>
<polyline points="807.5,239.4 812,235.6 824,234.9 827,237.1 831.5,234.1 834.5,225.9 837.5,213.9"/>
<polyline points="835,216 842,222 850,226 860,230 872,236 885,246 893,255 900,265" stroke-width="1.7"/>
<polyline points="748,500.5 740.8,508.1 737.6,506.3 735.4,503.6 730,498.7 725,493.8 712.5,490 700,496.2 690,500"/>
</g>
<g fill="none" stroke-linejoin="round" stroke-linecap="round">
<polyline points="307.4,726.4 311.9,732.4 317.9,738.3 326.8,739.8 335.8,739.8 343.3,739.1 350.8,735.3 358.3,732.4 359.8,724.9 360.5,722.6" stroke="#000" stroke-width="2.2" shape-rendering="crispEdges"/>
<polyline points="360.5,722.6 367.2,718.1 374.7,715.9 383.7,712.9 393.4,709.2" stroke="#000" stroke-width="2.2" shape-rendering="crispEdges"/>
<polyline points="307.4,726.4 311.9,732.4 317.9,738.3 326.8,739.8 335.8,739.8 343.3,739.1 350.8,735.3 358.3,732.4 359.8,724.9 360.5,722.6" stroke="#800080" stroke-width="0.9" shape-rendering="crispEdges" transform="translate(0.4,0.4)"/>
<polyline points="360.5,722.6 367.2,718.1 374.7,715.9 383.7,712.9 393.4,709.2" stroke="#800080" stroke-width="0.9" shape-rendering="crispEdges" transform="translate(0.4,0.4)"/>
</g>
<g stroke="#0080FF" stroke-width="1" stroke-dasharray="3 3" shape-rendering="crispEdges">
<line x1="222.5" y1="116" x2="222.5" y2="930"/>
<line x1="369.5" y1="116" x2="369.5" y2="930"/>
<line x1="517.5" y1="116" x2="517.5" y2="930"/>
<line x1="664.5" y1="116" x2="664.5" y2="930"/>
<line x1="812.5" y1="116" x2="812.5" y2="930"/>
<line x1="960.5" y1="116" x2="960.5" y2="930"/>
<line x1="99" y1="151.5" x2="1076" y2="151.5"/>
<line x1="99" y1="210.5" x2="1076" y2="210.5"/>
<line x1="99" y1="269.5" x2="1076" y2="269.5"/>
<line x1="99" y1="328.5" x2="1076" y2="328.5"/>
<line x1="99" y1="387.5" x2="1076" y2="387.5"/>
<line x1="99" y1="446.5" x2="1076" y2="446.5"/>
<line x1="99" y1="505.5" x2="1076" y2="505.5"/>
<line x1="99" y1="564.5" x2="1076" y2="564.5"/>
<line x1="99" y1="623.5" x2="1076" y2="623.5"/>
<line x1="99" y1="682.5" x2="1076" y2="682.5"/>
<line x1="99" y1="741.5" x2="1076" y2="741.5"/>
<line x1="99" y1="800.5" x2="1076" y2="800.5"/>
<line x1="99" y1="859.5" x2="1076" y2="859.5"/>
<line x1="99" y1="919.5" x2="1076" y2="919.5"/>
</g>
<rect x="99.5" y="116.5" width="977" height="814" fill="none" stroke="#000" stroke-width="1" shape-rendering="crispEdges"/>
<g stroke="#000" stroke-width="1" shape-rendering="crispEdges">
<line x1="93" y1="151.5" x2="99" y2="151.5"/>
<line x1="93" y1="210.5" x2="99" y2="210.5"/>
<line x1="93" y1="269.5" x2="99" y2="269.5"/>
<line x1="93" y1="328.5" x2="99" y2="328.5"/>
<line x1="93" y1="387.5" x2="99" y2="387.5"/>
<line x1="93" y1="446.5" x2="99" y2="446.5"/>
<line x1="93" y1="505.5" x2="99" y2="505.5"/>
<line x1="93" y1="564.5" x2="99" y2="564.5"/>
<line x1="93" y1="623.5" x2="99" y2="623.5"/>
<line x1="93" y1="682.5" x2="99" y2="682.5"/>
<line x1="93" y1="741.5" x2="99" y2="741.5"/>
<line x1="93" y1="800.5" x2="99" y2="800.5"/>
<line x1="93" y1="859.5" x2="99" y2="859.5"/>
<line x1="93" y1="919.5" x2="99" y2="919.5"/>
<line x1="95" y1="128.5" x2="99" y2="128.5"/>
<line x1="95" y1="139.5" x2="99" y2="139.5"/>
<line x1="95" y1="163.5" x2="99" y2="163.5"/>
<line x1="95" y1="175.5" x2="99" y2="175.5"/>
<line x1="95" y1="187.5" x2="99" y2="187.5"/>
<line x1="95" y1="199.5" x2="99" y2="199.5"/>
<line x1="95" y1="222.5" x2="99" y2="222.5"/>
<line x1="95" y1="234.5" x2="99" y2="234.5"/>
<line x1="95" y1="246.5" x2="99" y2="246.5"/>
<line x1="95" y1="258.5" x2="99" y2="258.5"/>
<line x1="95" y1="281.5" x2="99" y2="281.5"/>
<line x1="95" y1="293.5" x2="99" y2="293.5"/>
<line x1="95" y1="305.5" x2="99" y2="305.5"/>
<line x1="95" y1="317.5" x2="99" y2="317.5"/>
<line x1="95" y1="340.5" x2="99" y2="340.5"/>
<line x1="95" y1="352.5" x2="99" y2="352.5"/>
<line x1="95" y1="364.5" x2="99" y2="364.5"/>
<line x1="95" y1="376.5" x2="99" y2="376.5"/>
<line x1="95" y1="399.5" x2="99" y2="399.5"/>
<line x1="95" y1="411.5" x2="99" y2="411.5"/>
<line x1="95" y1="423.5" x2="99" y2="423.5"/>
<line x1="95" y1="435.5" x2="99" y2="435.5"/>
<line x1="95" y1="459.5" x2="99" y2="459.5"/>
<line x1="95" y1="470.5" x2="99" y2="470.5"/>
<line x1="95" y1="482.5" x2="99" y2="482.5"/>
<line x1="95" y1="494.5" x2="99" y2="494.5"/>
<line x1="95" y1="518.5" x2="99" y2="518.5"/>
<line x1="95" y1="529.5" x2="99" y2="529.5"/>
<line x1="95" y1="541.5" x2="99" y2="541.5"/>
<line x1="95" y1="553.5" x2="99" y2="553.5"/>
<line x1="95" y1="577.5" x2="99" y2="577.5"/>
<line x1="95" y1="588.5" x2="99" y2="588.5"/>
<line x1="95" y1="600.5" x2="99" y2="600.5"/>
<line x1="95" y1="612.5" x2="99" y2="612.5"/>
<line x1="95" y1="636.5" x2="99" y2="636.5"/>
<line x1="95" y1="648.5" x2="99" y2="648.5"/>
<line x1="95" y1="659.5" x2="99" y2="659.5"/>
<line x1="95" y1="671.5" x2="99" y2="671.5"/>
<line x1="95" y1="695.5" x2="99" y2="695.5"/>
<line x1="95" y1="707.5" x2="99" y2="707.5"/>
<line x1="95" y1="718.5" x2="99" y2="718.5"/>
<line x1="95" y1="730.5" x2="99" y2="730.5"/>
<line x1="95" y1="754.5" x2="99" y2="754.5"/>
<line x1="95" y1="766.5" x2="99" y2="766.5"/>
<line x1="95" y1="778.5" x2="99" y2="778.5"/>
<line x1="95" y1="789.5" x2="99" y2="789.5"/>
<line x1="95" y1="813.5" x2="99" y2="813.5"/>
<line x1="95" y1="825.5" x2="99" y2="825.5"/>
<line x1="95" y1="837.5" x2="99" y2="837.5"/>
<line x1="95" y1="848.5" x2="99" y2="848.5"/>
<line x1="95" y1="872.5" x2="99" y2="872.5"/>
<line x1="95" y1="884.5" x2="99" y2="884.5"/>
<line x1="95" y1="896.5" x2="99" y2="896.5"/>
<line x1="95" y1="908.5" x2="99" y2="908.5"/>
<line x1="222.5" y1="931" x2="222.5" y2="937"/>
<line x1="369.5" y1="931" x2="369.5" y2="937"/>
<line x1="517.5" y1="931" x2="517.5" y2="937"/>
<line x1="664.5" y1="931" x2="664.5" y2="937"/>
<line x1="812.5" y1="931" x2="812.5" y2="937"/>
<line x1="960.5" y1="931" x2="960.5" y2="937"/>
<line x1="104.5" y1="931" x2="104.5" y2="935"/>
<line x1="118.5" y1="931" x2="118.5" y2="935"/>
<line x1="133.5" y1="931" x2="133.5" y2="935"/>
<line x1="148.5" y1="931" x2="148.5" y2="935"/>
<line x1="163.5" y1="931" x2="163.5" y2="935"/>
<line x1="177.5" y1="931" x2="177.5" y2="935"/>
<line x1="192.5" y1="931" x2="192.5" y2="935"/>
<line x1="207.5" y1="931" x2="207.5" y2="935"/>
<line x1="236.5" y1="931" x2="236.5" y2="935"/>
<line x1="251.5" y1="931" x2="251.5" y2="935"/>
<line x1="266.5" y1="931" x2="266.5" y2="935"/>
<line x1="281.5" y1="931" x2="281.5" y2="935"/>
<line x1="295.5" y1="931" x2="295.5" y2="935"/>
<line x1="310.5" y1="931" x2="310.5" y2="935"/>
<line x1="325.5" y1="931" x2="325.5" y2="935"/>
<line x1="340.5" y1="931" x2="340.5" y2="935"/>
<line x1="355.5" y1="931" x2="355.5" y2="935"/>
<line x1="384.5" y1="931" x2="384.5" y2="935"/>
<line x1="399.5" y1="931" x2="399.5" y2="935"/>
<line x1="414.5" y1="931" x2="414.5" y2="935"/>
<line x1="428.5" y1="931" x2="428.5" y2="935"/>
<line x1="443.5" y1="931" x2="443.5" y2="935"/>
<line x1="458.5" y1="931" x2="458.5" y2="935"/>
<line x1="473.5" y1="931" x2="473.5" y2="935"/>
<line x1="487.5" y1="931" x2="487.5" y2="935"/>
<line x1="502.5" y1="931" x2="502.5" y2="935"/>
<line x1="532.5" y1="931" x2="532.5" y2="935"/>
<line x1="546.5" y1="931" x2="546.5" y2="935"/>
<line x1="561.5" y1="931" x2="561.5" y2="935"/>
<line x1="576.5" y1="931" x2="576.5" y2="935"/>
<line x1="591.5" y1="931" x2="591.5" y2="935"/>
<line x1="605.5" y1="931" x2="605.5" y2="935"/>
<line x1="620.5" y1="931" x2="620.5" y2="935"/>
<line x1="635.5" y1="931" x2="635.5" y2="935"/>
<line x1="650.5" y1="931" x2="650.5" y2="935"/>
<line x1="679.5" y1="931" x2="679.5" y2="935"/>
<line x1="694.5" y1="931" x2="694.5" y2="935"/>
<line x1="709.5" y1="931" x2="709.5" y2="935"/>
<line x1="723.5" y1="931" x2="723.5" y2="935"/>
<line x1="738.5" y1="931" x2="738.5" y2="935"/>
<line x1="753.5" y1="931" x2="753.5" y2="935"/>
<line x1="768.5" y1="931" x2="768.5" y2="935"/>
<line x1="783.5" y1="931" x2="783.5" y2="935"/>
<line x1="797.5" y1="931" x2="797.5" y2="935"/>
<line x1="827.5" y1="931" x2="827.5" y2="935"/>
<line x1="842.5" y1="931" x2="842.5" y2="935"/>
<line x1="856.5" y1="931" x2="856.5" y2="935"/>
<line x1="871.5" y1="931" x2="871.5" y2="935"/>
<line x1="886.5" y1="931" x2="886.5" y2="935"/>
<line x1="901.5" y1="931" x2="901.5" y2="935"/>
<line x1="915.5" y1="931" x2="915.5" y2="935"/>
<line x1="930.5" y1="931" x2="930.5" y2="935"/>
<line x1="945.5" y1="931" x2="945.5" y2="935"/>
<line x1="974.5" y1="931" x2="974.5" y2="935"/>
<line x1="989.5" y1="931" x2="989.5" y2="935"/>
<line x1="1004.5" y1="931" x2="1004.5" y2="935"/>
<line x1="1019.5" y1="931" x2="1019.5" y2="935"/>
<line x1="1033.5" y1="931" x2="1033.5" y2="935"/>
<line x1="1048.5" y1="931" x2="1048.5" y2="935"/>
<line x1="1063.5" y1="931" x2="1063.5" y2="935"/>
</g>
<g font-family="'Liberation Sans',Arial,sans-serif" font-size="14.6" fill="#000">
<text x="88" y="156.7" text-anchor="end" textLength="55.5" lengthAdjust="spacingAndGlyphs">1160000</text>
<text x="88" y="215.7" text-anchor="end" textLength="55.5" lengthAdjust="spacingAndGlyphs">1140000</text>
<text x="88" y="274.7" text-anchor="end" textLength="55.5" lengthAdjust="spacingAndGlyphs">1120000</text>
<text x="88" y="333.7" text-anchor="end" textLength="55.5" lengthAdjust="spacingAndGlyphs">1100000</text>
<text x="88" y="392.7" text-anchor="end" textLength="55.5" lengthAdjust="spacingAndGlyphs">1080000</text>
<text x="88" y="451.7" text-anchor="end" textLength="55.5" lengthAdjust="spacingAndGlyphs">1060000</text>
<text x="88" y="510.7" text-anchor="end" textLength="55.5" lengthAdjust="spacingAndGlyphs">1040000</text>
<text x="88" y="569.7" text-anchor="end" textLength="55.5" lengthAdjust="spacingAndGlyphs">1020000</text>
<text x="88" y="628.7" text-anchor="end" textLength="55.5" lengthAdjust="spacingAndGlyphs">1000000</text>
<text x="88" y="687.7" text-anchor="end" textLength="55.5" lengthAdjust="spacingAndGlyphs">980000</text>
<text x="88" y="746.7" text-anchor="end" textLength="55.5" lengthAdjust="spacingAndGlyphs">960000</text>
<text x="88" y="805.7" text-anchor="end" textLength="55.5" lengthAdjust="spacingAndGlyphs">940000</text>
<text x="88" y="864.7" text-anchor="end" textLength="55.5" lengthAdjust="spacingAndGlyphs">920000</text>
<text x="88" y="924.7" text-anchor="end" textLength="55.5" lengthAdjust="spacingAndGlyphs">900000</text>
<text x="222.5" y="954.2" text-anchor="middle" textLength="46.8" lengthAdjust="spacingAndGlyphs">450000</text>
<text x="369.5" y="954.2" text-anchor="middle" textLength="46.8" lengthAdjust="spacingAndGlyphs">500000</text>
<text x="517.5" y="954.2" text-anchor="middle" textLength="46.8" lengthAdjust="spacingAndGlyphs">550000</text>
<text x="664.5" y="954.2" text-anchor="middle" textLength="46.8" lengthAdjust="spacingAndGlyphs">600000</text>
<text x="812.5" y="954.2" text-anchor="middle" textLength="46.8" lengthAdjust="spacingAndGlyphs">650000</text>
<text x="960.5" y="954.2" text-anchor="middle" textLength="46.8" lengthAdjust="spacingAndGlyphs">700000</text>
<text x="27.2" y="104.6">[m]</text>
<text x="1055.6" y="971">[m]</text>
<text x="99" y="992.5" textLength="258" lengthAdjust="spacingAndGlyphs" xml:space="preserve">01/09/2017 0:00:00  Time Step 0 of 719.</text>
</g>
<g font-family="'Liberation Sans',Arial,sans-serif" font-size="14" fill="#000">
<text x="1116" y="653.8" textLength="138.5" lengthAdjust="spacingAndGlyphs">Sign. Wave Height [m]</text>
<rect x="1116.5" y="661.5" width="28" height="14" fill="#FF0000" stroke="#000" stroke-width="1" shape-rendering="crispEdges"/>
<text x="1152" y="673.6" textLength="71.5" lengthAdjust="spacingAndGlyphs">Above 1.05</text>
<rect x="1116.5" y="677.5" width="28" height="14" fill="#FF5500" stroke="#000" stroke-width="1" shape-rendering="crispEdges"/>
<text x="1155.5" y="689.6" textLength="68" lengthAdjust="spacingAndGlyphs">1.00 - 1.05</text>
<rect x="1116.5" y="693.5" width="28" height="14" fill="#FFAA00" stroke="#000" stroke-width="1" shape-rendering="crispEdges"/>
<text x="1155.5" y="705.6" textLength="68" lengthAdjust="spacingAndGlyphs">0.95 - 1.00</text>
<rect x="1116.5" y="709.5" width="28" height="14" fill="#FFFF00" stroke="#000" stroke-width="1" shape-rendering="crispEdges"/>
<text x="1155.5" y="721.6" textLength="68" lengthAdjust="spacingAndGlyphs">0.90 - 0.95</text>
<rect x="1116.5" y="725.5" width="28" height="14" fill="#AAFF00" stroke="#000" stroke-width="1" shape-rendering="crispEdges"/>
<text x="1155.5" y="737.6" textLength="68" lengthAdjust="spacingAndGlyphs">0.85 - 0.90</text>
<rect x="1116.5" y="741.5" width="28" height="14" fill="#55FF00" stroke="#000" stroke-width="1" shape-rendering="crispEdges"/>
<text x="1155.5" y="753.6" textLength="68" lengthAdjust="spacingAndGlyphs">0.80 - 0.85</text>
<rect x="1116.5" y="757.5" width="28" height="14" fill="#00FF00" stroke="#000" stroke-width="1" shape-rendering="crispEdges"/>
<text x="1155.5" y="769.6" textLength="68" lengthAdjust="spacingAndGlyphs">0.75 - 0.80</text>
<rect x="1116.5" y="773.5" width="28" height="14" fill="#00E339" stroke="#000" stroke-width="1" shape-rendering="crispEdges"/>
<text x="1155.5" y="785.6" textLength="68" lengthAdjust="spacingAndGlyphs">0.70 - 0.75</text>
<rect x="1116.5" y="789.5" width="28" height="14" fill="#00C671" stroke="#000" stroke-width="1" shape-rendering="crispEdges"/>
<text x="1155.5" y="801.6" textLength="68" lengthAdjust="spacingAndGlyphs">0.65 - 0.70</text>
<rect x="1116.5" y="805.5" width="28" height="14" fill="#00AAAA" stroke="#000" stroke-width="1" shape-rendering="crispEdges"/>
<text x="1155.5" y="817.6" textLength="68" lengthAdjust="spacingAndGlyphs">0.60 - 0.65</text>
<rect x="1116.5" y="821.5" width="28" height="14" fill="#0071C6" stroke="#000" stroke-width="1" shape-rendering="crispEdges"/>
<text x="1155.5" y="833.6" textLength="68" lengthAdjust="spacingAndGlyphs">0.55 - 0.60</text>
<rect x="1116.5" y="837.5" width="28" height="14" fill="#0039E3" stroke="#000" stroke-width="1" shape-rendering="crispEdges"/>
<text x="1155.5" y="849.6" textLength="68" lengthAdjust="spacingAndGlyphs">0.50 - 0.55</text>
<rect x="1116.5" y="853.5" width="28" height="14" fill="#0000FF" stroke="#000" stroke-width="1" shape-rendering="crispEdges"/>
<text x="1155.5" y="865.6" textLength="68" lengthAdjust="spacingAndGlyphs">0.45 - 0.50</text>
<rect x="1116.5" y="869.5" width="28" height="14" fill="#2B00D5" stroke="#000" stroke-width="1" shape-rendering="crispEdges"/>
<text x="1155.5" y="881.6" textLength="68" lengthAdjust="spacingAndGlyphs">0.40 - 0.45</text>
<rect x="1116.5" y="885.5" width="28" height="14" fill="#5500AA" stroke="#000" stroke-width="1" shape-rendering="crispEdges"/>
<text x="1155.5" y="897.6" textLength="68" lengthAdjust="spacingAndGlyphs">0.35 - 0.40</text>
<rect x="1116.5" y="901.5" width="28" height="14" fill="#800080" stroke="#000" stroke-width="1" shape-rendering="crispEdges"/>
<text x="1152" y="913.6" textLength="72" lengthAdjust="spacingAndGlyphs" xml:space="preserve">Below  0.35</text>
<rect x="1116.5" y="917.5" width="28" height="14" fill="#DCDCDC" stroke="#000" stroke-width="1" shape-rendering="crispEdges"/>
<text x="1152" y="929.6" textLength="103.5" lengthAdjust="spacingAndGlyphs">Undefined Value</text>
</g>
</svg>
<div id="title" class="abs"><span>MIKE Zero - [Data File: SWAreaT9_new.dfsu]</span></div>
<div id="menu" class="abs">
<span style="left:38px">File</span><span style="left:79px">Edit</span><span style="left:123px">View</span>
<span style="left:173px;letter-spacing:0px">Data</span><span style="left:222px;letter-spacing:0.2px">Video</span><span style="left:279px">Colors</span>
<span style="left:340px;letter-spacing:0.25px">Window</span><span style="left:413px">Help</span></div>
<div class="abs" style="left:0;top:52px;width:1337px;height:1px;background:#F0F0F0"></div><div id="tb" class="abs"></div>
<div id="tbline1" class="abs"></div><div id="tbline2" class="abs"></div>
<div id="leftb1" class="abs"></div><div id="leftb2" class="abs"></div>
<div class="tbx" style="left:522px;top:57px;width:120px;height:22px;"><span style="position:absolute;left:3.5px;top:2px;font-size:14.4px;letter-spacing:-0.5px">Sign. Wave Hei</span>
<svg width="12" height="8" style="position:absolute;left:105px;top:8px" viewBox="0 0 12 8"><path d="M1.5 1.5 L6 6 L10.5 1.5" fill="none" stroke="#333" stroke-width="1.2"/></svg></div>
<div class="tbx" style="left:720px;top:58px;width:38px;height:21px;"><span style="position:absolute;right:3px;top:1px">1</span></div>
<div class="tbx" style="left:975px;top:58px;width:58px;height:21px;"><span style="position:absolute;right:3px;top:1px">0</span></div>
<div id="status" class="abs"></div>

<svg width="1337" height="90" viewBox="0 0 1337 90" style="position:absolute;left:0;top:0">
<!-- title icon -->
<g>
 <circle cx="12.2" cy="13.6" r="9.8" fill="#F2F6FA" stroke="#C4C9CE" stroke-width="0.9"/>
 <path d="M4.2 10.5 C7.5 5.2 15.5 3.8 21.3 9.2 C20.8 10.6 20.2 11.3 19.6 11.9 C15.6 8.2 9.5 8 4.2 10.5 Z" fill="#2A86B8"/>
 <path d="M6 8.6 C9.5 6.2 14.5 6 18.6 8.6 C14.5 7.4 10 7.6 6 8.6 Z" fill="#DDEFF8"/>
 <path d="M4.6 15.8 C7.2 11.4 13.8 10.2 21.6 13.6 L21.6 15.2 C15 12.8 9 13.4 6.8 17 Z" fill="#1C7FB0"/>
 <path d="M14 10.6 C17 10.4 20 11.4 21.8 13 L21.4 14.2 C19.4 12.4 16.6 11.4 14 10.6 Z" fill="#37B5B0"/>
 <rect x="7" y="15.4" width="15" height="8.8" fill="#0B4F7E"/>
 <text x="14.5" y="23.1" font-family="'Liberation Sans',Arial,sans-serif" font-size="9.2" font-weight="bold" fill="#fff" text-anchor="middle" textLength="12.4" lengthAdjust="spacingAndGlyphs">M2</text>
</g>
<!-- menu icon -->
<g>
 <path d="M10.2 32.6 C16 30.8 24.5 31.4 28.6 34.6 L28.6 50.2" fill="none" stroke="#CFCFCF" stroke-width="1.3"/>
 <path d="M9.2 45 L12.4 40.8 L13.2 45.6 Z" fill="#C9C9C9"/>
 <path d="M11 34.8 L20.2 33 L27 36.4 L25.4 45.6 L16 48.8 L12.8 43.4 Z" fill="#0AA2F2"/>
 <path d="M11 34.8 L20.2 33 L27 36.4 L17.8 38.4 Z" fill="#1FB0FA"/>
 <path d="M11 34.8 L17.8 38.4 L16 48.8 L12.8 43.4 Z" fill="#0596E6"/>
</g>
<rect x="2.5" y="55" width="1" height="26" fill="#fff"/><rect x="3.5" y="55" width="1" height="26" fill="#A0A0A0"/><rect x="1.5" y="80" width="3" height="1" fill="#A0A0A0"/><rect x="6.5" y="55" width="1" height="26" fill="#fff"/><rect x="7.5" y="55" width="1" height="26" fill="#A0A0A0"/><rect x="5.5" y="80" width="3" height="1" fill="#A0A0A0"/><rect x="81" y="58" width="1" height="20" fill="#A0A0A0"/><rect x="82" y="58" width="1" height="20" fill="#fff"/><rect x="158" y="58" width="1" height="20" fill="#A0A0A0"/><rect x="159" y="58" width="1" height="20" fill="#fff"/><rect x="236" y="54" width="1" height="29" fill="#A0A0A0"/><rect x="237" y="54" width="1" height="29" fill="#fff"/><rect x="241" y="55" width="1" height="26" fill="#fff"/><rect x="242" y="55" width="1" height="26" fill="#A0A0A0"/><rect x="240" y="80" width="3" height="1" fill="#A0A0A0"/><rect x="245" y="55" width="1" height="26" fill="#fff"/><rect x="246" y="55" width="1" height="26" fill="#A0A0A0"/><rect x="244" y="80" width="3" height="1" fill="#A0A0A0"/><rect x="367" y="58" width="1" height="20" fill="#A0A0A0"/><rect x="368" y="58" width="1" height="20" fill="#fff"/><rect x="399" y="54" width="1" height="29" fill="#A0A0A0"/><rect x="400" y="54" width="1" height="29" fill="#fff"/><rect x="405" y="55" width="1" height="26" fill="#fff"/><rect x="406" y="55" width="1" height="26" fill="#A0A0A0"/><rect x="404" y="80" width="3" height="1" fill="#A0A0A0"/><rect x="409" y="55" width="1" height="26" fill="#fff"/><rect x="410" y="55" width="1" height="26" fill="#A0A0A0"/><rect x="408" y="80" width="3" height="1" fill="#A0A0A0"/><rect x="508" y="54" width="1" height="29" fill="#A0A0A0"/><rect x="509" y="54" width="1" height="29" fill="#fff"/><rect x="514" y="55" width="1" height="26" fill="#fff"/><rect x="515" y="55" width="1" height="26" fill="#A0A0A0"/><rect x="513" y="80" width="3" height="1" fill="#A0A0A0"/><rect x="518" y="55" width="1" height="26" fill="#fff"/><rect x="519" y="55" width="1" height="26" fill="#A0A0A0"/><rect x="517" y="80" width="3" height="1" fill="#A0A0A0"/><rect x="644" y="58" width="1" height="20" fill="#A0A0A0"/><rect x="645" y="58" width="1" height="20" fill="#fff"/><rect x="762" y="58" width="1" height="20" fill="#A0A0A0"/><rect x="763" y="58" width="1" height="20" fill="#fff"/>
<!-- new -->
<path d="M16.5 60.5 H24 L27.5 64 V72.5 H16.5 Z" fill="#fff" stroke="#000"/>
<path d="M24 60.5 V64 H27.5" fill="none" stroke="#000"/>
<!-- open -->
<g>
 <defs><pattern id="chk" width="2" height="2" patternUnits="userSpaceOnUse"><rect width="2" height="2" fill="#FFFF00"/><rect width="1" height="1" fill="#fff"/><rect x="1" y="1" width="1" height="1" fill="#fff"/></pattern></defs><path d="M37.5 72.5 V63.5 H39 V62.5 H43 V63.5 H48.5 V67" fill="url(#chk)" stroke="#000"/>
 <path d="M37.5 72.5 L42 67.5 H52.5 L48 72.5 Z" fill="#808000" stroke="#000"/>
 <path d="M45.5 61.5 C47.5 59 50.5 59.5 51.5 62.5" fill="none" stroke="#000"/>
 <path d="M49.8 62 L52.2 64.5 L52.6 61 Z" fill="#000"/>
</g>
<!-- save -->
<g>
 <rect x="59.5" y="60.5" width="14" height="13" fill="#808000" stroke="#000"/>
 <rect x="62" y="61" width="8.5" height="6" fill="#fff"/>
 <rect x="62.5" y="69" width="8" height="4.5" fill="#000"/>
 <rect x="68" y="70" width="2" height="3" fill="#C0C0C0"/>
</g>
<!-- cut (disabled) -->
<g stroke="#9A9A9A" fill="none" stroke-width="1.1">
 <path d="M96 59.5 L100 69 M101.5 59.5 L97.5 69"/>
 <circle cx="96" cy="71" r="2.1"/><circle cx="101.5" cy="71" r="2.1"/>
</g>
<!-- copy (disabled) -->
<g stroke="#9A9A9A" fill="#F4F4F4">
 <path d="M114.5 60.5 H120 L122.5 63 V69.5 H114.5 Z"/>
 <path d="M120.5 64.5 H126 L128.5 67 V73.5 H120.5 Z"/>
 <path d="M116 63.5 H120 M116 65.5 H119.5 M122 68.5 H126.5 M122 70.5 H126.5" stroke-width="0.8"/>
</g>
<!-- paste (disabled) -->
<g>
 <rect x="137.5" y="61.5" width="13" height="11.5" rx="1.5" fill="#9A9A9A"/>
 <rect x="141" y="60" width="6" height="3" rx="1" fill="#9A9A9A"/>
 <rect x="144.5" y="66.5" width="7.5" height="7" fill="#F4F4F4" stroke="#9A9A9A"/>
 <path d="M146 69 H150.5 M146 71 H150.5" stroke="#9A9A9A" stroke-width="0.8"/>
</g>
<!-- print -->
<g>
 <path d="M170 63 L172 59.5 H180 L178.5 63 Z" fill="#fff" stroke="#000" stroke-width="0.9"/>
 <path d="M167.5 66 L170.5 63 H181.5 V69 L178.5 72.5 H167.5 Z" fill="#fff" stroke="#000" stroke-width="1"/>
 <path d="M167.5 66.5 H178.5 V72.5 M178.5 66.5 L181.5 63.3" fill="none" stroke="#000" stroke-width="1"/>
 <path d="M168 68.5 H178 M168 70.5 H178" stroke="#000" stroke-width="1"/>
 <rect x="175" y="69.2" width="2.2" height="1" fill="#D8C000"/>
</g>
<!-- help ? -->
<text x="198" y="73.8" font-family="'Liberation Serif',serif" font-size="19" font-weight="bold" fill="#FFFF00" stroke="#000" stroke-width="1.6" paint-order="stroke" text-anchor="middle">?</text>
<!-- context help -->
<path d="M214.5 59.5 V71.5 L217.3 68.8 L219.6 73.8 L221.6 72.8 L219.4 68 H223 Z" fill="#000"/>
<text x="224.8" y="72" font-family="'Liberation Serif',serif" font-size="17" font-weight="bold" fill="#000080" text-anchor="middle">?</text>
<!-- zoom in -->
<g>
 <circle cx="260" cy="65.5" r="5.6" fill="#E8F8FF" stroke="#000" stroke-width="1.2"/>
 <path d="M264 69.8 L269.5 75.5" stroke="#D00000" stroke-width="2.4"/>
 <path d="M262 61.5 A4.5 4.5 0 0 1 264.3 65" fill="none" stroke="#fff" stroke-width="1"/>
</g>
<!-- zoom out -->
<g>
 <circle cx="283" cy="65.5" r="5.6" fill="#E8F8FF" stroke="#000" stroke-width="1.2"/>
 <path d="M287 69.8 L292.5 75.5" stroke="#D00000" stroke-width="2.4"/>
 <path d="M280 65.5 H286" stroke="#000" stroke-width="1.4"/>
</g>
<!-- back / fwd (disabled) -->
<g fill="#9A9A9A">
 <path d="M299.5 65.5 L305.5 60.5 V63.5 H313.5 V67.5 H305.5 V70.5 Z"/>
 <circle cx="309.5" cy="72.5" r="2.3" fill="none" stroke="#9A9A9A"/><path d="M311 74.2 L313.2 76.5" stroke="#9A9A9A" stroke-width="1.2"/>
 <path d="M337 65.5 L331 60.5 V63.5 H323 V67.5 H331 V70.5 Z"/>
 <circle cx="327.5" cy="72.5" r="2.3" fill="none" stroke="#9A9A9A"/><path d="M329 74.2 L331.2 76.5" stroke="#9A9A9A" stroke-width="1.2"/>
</g>
<!-- hand -->
<g fill="#fff" stroke="#000" stroke-width="0.95" stroke-linejoin="round">
 <path d="M350.6 67.2 L347.4 68.4 L350.6 71.8 Z"/>
 <rect x="350.5" y="62" width="2" height="8" rx="1"/>
 <rect x="352.5" y="60" width="2" height="10" rx="1"/>
 <rect x="354.5" y="60.3" width="2" height="10" rx="1"/>
 <rect x="356.5" y="62" width="2" height="8" rx="1"/>
 <path d="M350.5 66.5 H358.5 V72 H350.5 Z" stroke="none"/>
 <path d="M350.5 66 V72 H358.5 V66" fill="none"/>
 <rect x="351.2" y="72.6" width="6.8" height="2.4"/>
</g>
<!-- grid button -->
<rect x="373.5" y="57.5" width="22" height="20" rx="2.5" fill="#CCE8FF" stroke="#99D1FF"/>
<g fill="#000" shape-rendering="crispEdges"><rect x="381" y="61" width="1" height="1"/><rect x="387" y="61" width="1" height="1"/><rect x="381" y="67" width="1" height="1"/><rect x="387" y="67" width="1" height="1"/><rect x="381" y="73" width="1" height="1"/><rect x="387" y="73" width="1" height="1"/><rect x="378" y="64" width="1" height="1"/><rect x="378" y="70" width="1" height="1"/><rect x="384" y="64" width="1" height="1"/><rect x="384" y="70" width="1" height="1"/><rect x="390" y="64" width="1" height="1"/><rect x="390" y="70" width="1" height="1"/></g>
<g fill="#000" shape-rendering="crispEdges">
<rect x="377" y="61" width="3" height="1"/><rect x="378" y="60" width="1" height="3"/><rect x="377" y="67" width="3" height="1"/><rect x="378" y="66" width="1" height="3"/><rect x="377" y="73" width="3" height="1"/><rect x="378" y="72" width="1" height="3"/><rect x="383" y="61" width="3" height="1"/><rect x="384" y="60" width="1" height="3"/><rect x="383" y="67" width="3" height="1"/><rect x="384" y="66" width="1" height="3"/><rect x="383" y="73" width="3" height="1"/><rect x="384" y="72" width="1" height="3"/><rect x="389" y="61" width="3" height="1"/><rect x="390" y="60" width="1" height="3"/><rect x="389" y="67" width="3" height="1"/><rect x="390" y="66" width="1" height="3"/><rect x="389" y="73" width="3" height="1"/><rect x="390" y="72" width="1" height="3"/>
</g>
<g stroke-width="1.3" stroke-linecap="round">
 <path d="M379.6 63 L380.6 64" stroke="#F00"/><path d="M381 64.4 L382.2 65.5" stroke="#00F"/><path d="M382.6 65.9 L383.2 66.4" stroke="#F00"/>
 <path d="M388.8 62.6 L387.8 63.3" stroke="#F00"/><path d="M387 63.9 L385.6 64.9" stroke="#00F"/>
 <path d="M385.3 70 L385.8 71" stroke="#00F"/><path d="M386.3 72 L386.5 74.3" stroke="#F00"/>
</g>
<!-- select arrow button -->
<rect x="413.5" y="57.5" width="22.5" height="20" rx="2" fill="#CCE8FF" stroke="#99D1FF"/>
<path d="M420.5 59.5 V72 L423.4 69.2 L425.8 74.6 L427.9 73.6 L425.6 68.4 H429.6 Z" fill="#FFFF00" stroke="#000" stroke-width="0.9"/>
<!-- icon: arrow + profile -->
<g>
 <path d="M445.5 58.5 V76 M440 68.5 H456" stroke="#000" stroke-width="0.9"/>
 <path d="M446 67 C448 62 451 61 453 64 C454 66 455 67 456.5 66.5" fill="none" stroke="#000" stroke-width="0.9"/>
 <path d="M439.5 63.5 V74 L442 71.7 L444 76.2 L445.8 75.3 L443.9 71 H447.2 Z" fill="#FFFF00" stroke="#000" stroke-width="0.8"/>
</g>
<!-- icon3 gray -->
<path d="M461 62 L465 64 L470 62.5 L474 60 L476.5 62 L475 66 L476 72 L472 75 L470 70 L466 71 L464 75.5 L461.5 71 Z" fill="#9A9A9A"/>
<!-- icon4 -->
<g>
 <path d="M489 62.5 L494 60 H500 L502 63.5 L499 68.5 H492 Z" fill="#8C8C8C" stroke="#000" stroke-width="0.9"/>
 <path d="M485 63.5 V74 L487.5 71.7 L489.5 76.2 L491.3 75.3 L489.4 71 H492.7 Z" fill="#FFFF00" stroke="#000" stroke-width="0.8"/>
</g>
<!-- layers up/down/rotate (disabled) -->
<g><path d="M653 65.5 L656.5 60.5 H665 V66.5 L661.5 71.5 H653 Z" fill="#9A9A9A"/><path d="M654.5 65.2 L657 61.8 H663.5 L661 65.2 Z" fill="#F0F0F0"/><rect x="654.2" y="67.6" width="6" height="1.6" fill="#F0F0F0"/><path d="M662.3 66.5 L664 64 V66.2 L662.3 68.8 Z" fill="#F0F0F0"/><path d="M676 65.5 L679.5 60.5 H688 V66.5 L684.5 71.5 H676 Z" fill="#9A9A9A"/><path d="M677.5 65.2 L680 61.8 H686.5 L684 65.2 Z" fill="#F0F0F0"/><rect x="677.2" y="67.6" width="6" height="1.6" fill="#F0F0F0"/><path d="M685.3 66.5 L687 64 V66.2 L685.3 68.8 Z" fill="#F0F0F0"/><path d="M666.8 74.5 V66 M664.6 68.3 L666.8 65 L669 68.3 Z" stroke="#9A9A9A" stroke-width="1.1" fill="#9A9A9A"/><path d="M689.8 65.5 V74 M687.6 71.8 L689.8 75 L692 71.8 Z" stroke="#9A9A9A" stroke-width="1.1" fill="#9A9A9A"/></g>
<g><circle cx="706.6" cy="68.3" r="3.3" fill="none" stroke="#9A9A9A" stroke-width="3.4"/><rect x="706.5" y="62.5" width="6.3" height="2.8" fill="#9A9A9A"/></g>
<!-- first / prev (disabled) -->
<g fill="#9A9A9A">
 <rect x="772" y="62" width="2" height="12"/><path d="M779.5 62 V74 L774 68 Z M785 62 V74 L779.5 68 Z"/>
 <rect x="797" y="62" width="2" height="12"/><path d="M806 62 V74 L799.5 68 Z"/>
 <!-- camera gray -->
 <path d="M818 62.5 H830 V70 H818 Z M816 63.5 L818 65 V67.5 L816 69 Z M830 65 L832.5 63 V69.5 L830 67.5 Z"/>
 <path d="M823 71.5 L827 71.5 L825 75 Z M822 75.3 L825.5 72.8 V77 Z"/>
 <rect x="816" y="60.5" width="3" height="2"/><rect x="828" y="60" width="4" height="2"/>
 <!-- reverse play -->
 <path d="M852 62.5 V74 L842 68.2 Z"/>
</g>
<!-- stop -->
<rect x="859.5" y="57.5" width="22" height="20" rx="2" fill="#CCE8FF" stroke="#99D1FF"/>
<rect x="866.5" y="64" width="8.5" height="8.5" fill="#000"/>
<!-- play -->
<path d="M888.5 62.5 V74 L898.5 68.2 Z" fill="#000"/>
<!-- video cam cyan -->
<g>
 <path d="M910.5 62.5 H921.5 V69.5 H910.5 Z" fill="#00B4C8" stroke="#000" stroke-width="0.9"/>
 <path d="M921.5 65 L924.5 63 V69 L921.5 67.5 Z" fill="#00B4C8" stroke="#000" stroke-width="0.8"/>
 <path d="M908 61 L910.5 63.5 M908 61 H911" stroke="#000" stroke-width="1"/>
 <rect x="912" y="64" width="4" height="2" fill="#003040"/>
 <path d="M913.5 71.5 V76.5 L918.5 74 Z" fill="#000"/>
</g>
<!-- next / last -->
<g fill="#000">
 <path d="M935 62 V74 L941.5 68 Z"/><rect x="941.5" y="62" width="2" height="12"/>
 <path d="M956 62 V74 L961.5 68 Z M961.5 62 V74 L967 68 Z"/><rect x="967" y="62" width="2" height="12"/>
</g>
<!-- delta t -->
<text x="1036.6" y="73.2" font-family="'Liberation Sans',Arial,sans-serif" font-weight="bold" font-size="15.5" fill="#000">Δ</text>
<text x="1048.3" y="73" font-family="'Liberation Serif',serif" font-style="italic" font-size="14" fill="#000">t</text>
<!-- last icon (disabled) -->
<g fill="none" stroke="#9A9A9A" stroke-width="1">
 <path d="M1062.5 61.5 H1071.5 L1075.5 65 V75.5 H1062.5 Z M1071.5 61.5 V65 H1075.5"/>
 <path d="M1066.5 66 C1068.5 64 1071.5 65 1071.5 67.5 M1071 71.5 C1069 73.5 1066 72.5 1066 70" />
 <path d="M1070 68 L1071.7 69.2 L1073 67.2 M1067.5 69.5 L1065.8 68.4 L1064.6 70.3"/>
</g>
<!-- toolbar right end -->
<rect x="1083" y="55" width="1" height="28" fill="#A0A0A0"/>
</svg>

</body></html>
